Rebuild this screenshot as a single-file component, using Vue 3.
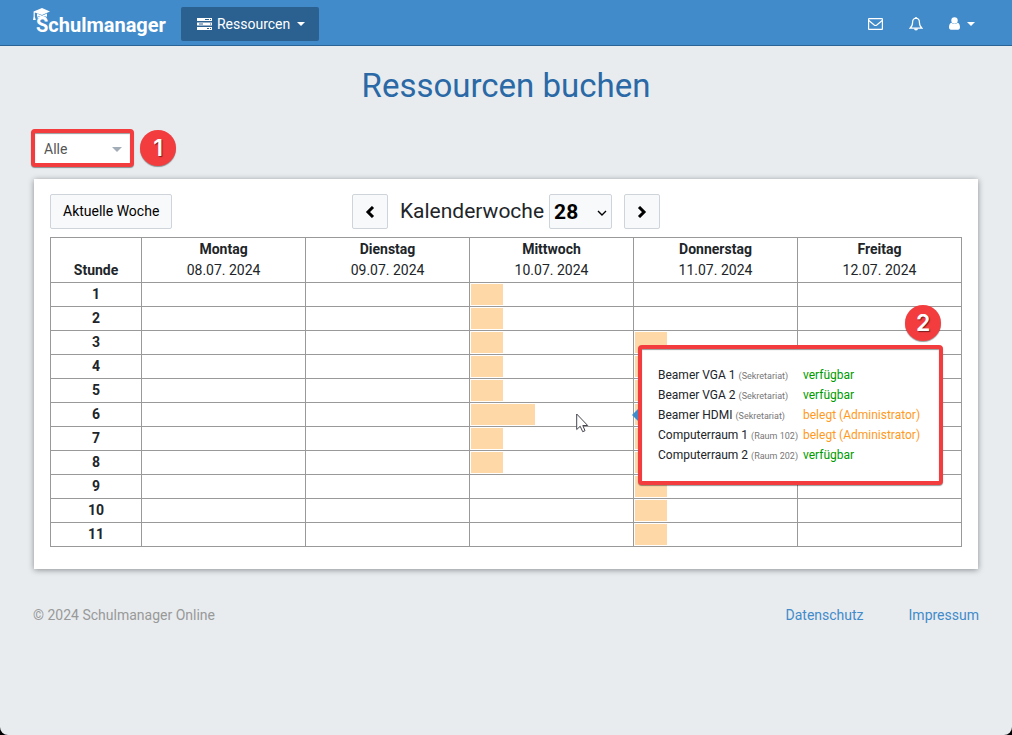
<script setup>
import { ref } from 'vue'

const filter = ref('Alle')
const week = ref('28')

const days = [
  { name: 'Montag', date: '08.07. 2024' },
  { name: 'Dienstag', date: '09.07. 2024' },
  { name: 'Mittwoch', date: '10.07. 2024' },
  { name: 'Donnerstag', date: '11.07. 2024' },
  { name: 'Freitag', date: '12.07. 2024' },
]

const hours = [1, 2, 3, 4, 5, 6, 7, 8, 9, 10, 11]

// Number of booked resources per weekday and lesson
const bookings = {
  Mittwoch: { 1: 1, 2: 1, 3: 1, 4: 1, 5: 1, 6: 2, 7: 1, 8: 1 },
  Donnerstag: { 3: 1, 4: 1, 5: 1, 6: 1, 7: 1, 8: 1, 9: 1, 10: 1, 11: 1 },
}

const booked = (day, hour) => bookings[day.name]?.[hour] ?? 0

const resources = [
  { name: 'Beamer VGA 1', room: 'Sekretariat' },
  { name: 'Beamer VGA 2', room: 'Sekretariat' },
  { name: 'Beamer HDMI', room: 'Sekretariat', by: 'Administrator' },
  { name: 'Computerraum 1', room: 'Raum 102', by: 'Administrator' },
  { name: 'Computerraum 2', room: 'Raum 202' },
]
</script>

<template>
  <div class="page">
    <header class="topbar">
      <a href="#" class="brand">
        <svg class="cap" width="18" height="15" viewBox="0 0 18 15" aria-hidden="true">
          <path d="M9 0 17 3.600 9 7 1.800 4.500 1.800 8.500 2.800 12 0 12 .6 8.500 .6 3.500Z" fill="#fff" />
          <path d="M4 5.500 9 7.800 14 5.500V8.800L11.500 8.200 9 9.500 6.500 8.200 4 8.800Z" fill="#fff" />
          <path d="M4.500 10 7.500 9 9 10.500 11 9 13.500 10.500" fill="none" stroke="#fff" stroke-width="1.300" />
        </svg>
        Schulmanager
      </a>
      <button type="button" class="module">
        <svg width="15" height="12" viewBox="0 0 15 12" aria-hidden="true">
          <path fill="#fff" d="M0 0H15V3H0ZM0 4.500H15V7.500H0ZM0 9H15V12H0Z" />
          <path stroke="#2a6191" d="M8 1.500H12M2 6H6M10 10.500H12" />
          <path stroke="#2a6191" d="M13 1.500H14M13 6H14M13 10.500H14" />
        </svg>
        Ressourcen
        <span class="caret"></span>
      </button>
      <nav class="tools">
        <button type="button" aria-label="Nachrichten">
          <svg width="15" height="12" viewBox="0 0 15 12" fill="none" stroke="#fff" stroke-width="1.200">
            <rect x=".6" y=".6" width="13.800" height="10.800" rx=".5" />
            <path d="M.8 2.500 6.200 7Q7.500 8 8.800 7L14.200 2.500" />
          </svg>
        </button>
        <button type="button" aria-label="Benachrichtigungen">
          <svg width="14" height="14" viewBox="0 0 14 14">
            <path d="M7 1.200C4.500 1.500 3.600 3.200 3.600 5.200 3.600 8.500 2.500 10 1 11.200H13C11.500 10 10.400 8.500 10.400 5.200 10.400 3.200 9.500 1.500 7 1.200Z" fill="none" stroke="#fff" stroke-width="1.200" />
            <path d="M6.300 0H7.700V1.500H6.300ZM5 11.500H9A2 2 0 0 1 5 11.500Z" fill="#fff" />
          </svg>
        </button>
        <button type="button" aria-label="Benutzer" class="user">
          <svg width="11" height="13" viewBox="0 0 11 13" fill="#fff">
            <circle cx="5.500" cy="3.500" r="3.200" />
            <path d="M2.500 5.800C.8 6.200 0 8 0 10.300 0 12 .8 12.700 2 12.700H9C10.200 12.700 11 12 11 10.300 11 8 10.200 6.200 8.500 5.800 7.200 7.500 3.800 7.500 2.500 5.800Z" />
          </svg>
          <span class="caret"></span>
        </button>
      </nav>
    </header>

    <main class="content">
      <h1>Ressourcen buchen</h1>

      <div class="filter-row">
        <div class="filter marked">
          <select v-model="filter" aria-label="Ressource">
            <option>Alle</option>
          </select>
          <span class="caret"></span>
        </div>
        <span class="marker">1</span>
      </div>

      <section class="card">
        <div class="toolbar">
          <button type="button" class="btn today">Aktuelle Woche</button>
          <div class="week">
            <button type="button" class="btn step" aria-label="Vorherige Woche">
              <svg width="10" height="12" viewBox="0 0 10 12"><path d="M8 1 3 6 8 11" fill="none" stroke="#000" stroke-width="3" /></svg>
            </button>
            <div class="week-pick">
              <label for="week">Kalenderwoche</label>
              <div class="week-select">
                <select id="week" v-model="week" class="btn">
                  <option>28</option>
                </select>
                <svg width="10" height="6" viewBox="0 0 10 6"><path d="M1 1 5 5 9 1" fill="none" stroke="#000" stroke-width="1.400" /></svg>
              </div>
            </div>
            <button type="button" class="btn step" aria-label="Nächste Woche">
              <svg width="10" height="12" viewBox="0 0 10 12"><path d="M2 1 7 6 2 11" fill="none" stroke="#000" stroke-width="3" /></svg>
            </button>
          </div>
        </div>

        <table class="plan">
          <thead>
            <tr>
              <th scope="col" class="hour">Stunde</th>
              <th v-for="day in days" :key="day.name" scope="col">
                {{ day.name }}<span class="date">{{ day.date }}</span>
              </th>
            </tr>
          </thead>
          <tbody>
            <tr v-for="hour in hours" :key="hour">
              <th scope="row">{{ hour }}</th>
              <td v-for="day in days" :key="day.name">
                <div class="slot">
                  <div class="bar" :style="{ width: booked(day, hour) * 20 + '%' }"></div>
                  <svg v-if="hour === 6 && day.name === 'Mittwoch'" class="pointer" width="13" height="20" viewBox="0 0 13 20" aria-hidden="true">
                    <path d="M.7 1V16.500L4.200 13.300 6.700 18.700 9 17.700 6.800 12.500H11.700Z" fill="#fff" stroke="#45454f" />
                  </svg>
                  <div v-if="hour === 6 && day.name === 'Donnerstag'" class="popover marked">
                    <span class="marker">2</span>
                    <table class="status">
                      <tbody>
                        <tr v-for="r in resources" :key="r.name">
                          <td>{{ r.name }} <small>({{ r.room }})</small></td>
                          <td :class="r.by ? 'taken' : 'free'">{{ r.by ? `belegt (${r.by})` : 'verfügbar' }}</td>
                        </tr>
                      </tbody>
                    </table>
                  </div>
                </div>
              </td>
            </tr>
          </tbody>
        </table>
      </section>

      <footer>
        <span>© 2024 Schulmanager Online</span>
        <nav>
          <a href="#">Datenschutz</a>
          <a href="#">Impressum</a>
        </nav>
      </footer>
    </main>
  </div>
</template>

<style>
html,
body {
  margin: 0;
  background: #000;
}
</style>

<style scoped>
* {
  box-sizing: border-box;
}
.page {
  min-height: 100vh;
  background: #e8ecef;
  border-radius: 0 0 8px 8px;
  color: #212529;
  font: 14px/21px Roboto, "Liberation Sans", sans-serif;
}
button,
select {
  font: inherit;
  color: inherit;
  margin: 0;
}
svg {
  display: block;
  flex: none;
}
a {
  color: #428bca;
  text-decoration: none;
}
.caret {
  border: 4px solid transparent;
  border-top-color: currentColor;
  border-bottom: 0;
}
.topbar {
  display: flex;
  align-items: center;
  height: 46px;
  padding: 2px 33px 0;
  background: #428bca;
  border-bottom: 1px solid #2a6496;
  color: #fff;
}
.brand {
  position: relative;
  padding: 4px 0 0 3px;
  margin-right: 15px;
  color: #fff;
  font-size: 20px;
  font-weight: 700;
}
.cap {
  position: absolute;
  left: 0;
  top: -3px;
}
.module {
  display: flex;
  align-items: center;
  gap: 5px;
  height: 34px;
  padding: 1px 14px 0 16px;
  border: 0;
  border-radius: 2px;
  background: #2a6191;
}
.module .caret {
  margin-left: 2px;
}
.tools {
  display: flex;
  align-items: center;
  gap: 26px;
  margin-left: auto;
}
.tools button {
  display: flex;
  align-items: center;
  gap: 7px;
  padding: 0;
  border: 0;
  background: none;
}
.tools .user {
  margin-right: 4px;
}
.content {
  padding: 18px 34px 0;
}
h1 {
  margin: 0;
  color: #2a69a6;
  font-size: 33px;
  font-weight: 400;
  line-height: 44px;
  text-align: center;
}
.filter-row {
  display: flex;
  align-items: center;
  gap: 6px;
  margin: 21px -3px 12px;
}
.marked {
  border: 4px solid #f33c3e;
  border-radius: 4px;
  background: #fff;
  box-shadow: 0 1px 1px rgba(0, 0, 0, 0.4), inset 0 1px 1px rgba(0, 0, 0, 0.4);
}
.filter {
  position: relative;
  width: 103px;
  height: 38px;
  color: #555;
}
.filter select {
  appearance: none;
  display: block;
  width: 100%;
  height: 100%;
  padding: 2px 9px 0;
  border: 0;
  background: transparent;
}
.filter .caret {
  position: absolute;
  right: 8px;
  top: 14px;
  border-width: 5px 5px 0;
  color: #a3adb8;
}
.marker {
  display: flex;
  align-items: center;
  justify-content: center;
  width: 36px;
  height: 36px;
  border-radius: 50%;
  background: #f33c3e;
  box-shadow: 0 1px 1px rgba(0, 0, 0, 0.4);
  color: #fff;
  font: 600 23px/36px Inter, "Open Sans", sans-serif;
  text-shadow: 1px 1px 1px rgba(0, 0, 0, 0.5);
}
.card {
  padding: 15px 16px 22px;
  background: #fff;
  box-shadow: 0 1px 6px rgba(0, 0, 0, 0.4);
}
.toolbar {
  display: grid;
  grid-template-columns: 1fr auto 1fr;
  align-items: center;
  margin-bottom: 8px;
}
.btn {
  height: 35px;
  border: 1px solid #ced4da;
  border-radius: 2px;
  background: #f8f9fb;
  color: #000;
}
.today {
  justify-self: start;
  padding: 0 12px;
}
.week,
.week-pick {
  display: flex;
  align-items: center;
}
.week {
  gap: 12px;
}
.week-pick {
  gap: 5px;
  font-size: 21px;
}
.step {
  display: flex;
  align-items: center;
  justify-content: center;
  width: 36px;
  padding: 0;
}
.week-select {
  position: relative;
}
.week-select select {
  appearance: none;
  display: block;
  width: 63px;
  padding: 2px 4px 0;
  font-weight: 700;
}
.week-select svg {
  position: absolute;
  right: 5px;
  top: 16px;
}
.plan {
  width: 100%;
  table-layout: fixed;
  border-collapse: collapse;
}
.plan > * > tr > * {
  height: 24px;
  padding: 0;
  border: 1px solid #999;
}
.plan > thead > tr > th {
  height: 45px;
  padding: 1px 0;
  vertical-align: bottom;
  text-align: center;
}
.plan > thead > tr > .hour {
  width: 10%;
}
.date {
  display: block;
  font-weight: 400;
}
.slot {
  position: relative;
  height: 23px;
  padding: 1px;
}
.bar {
  height: 21px;
  background: #ffd8a8;
}
.pointer {
  position: absolute;
  left: 65%;
  top: 10px;
}
.popover {
  position: absolute;
  z-index: 1;
  left: 4px;
  top: 50%;
  transform: translateY(-50%);
  padding: 16px 19px 16px 14px;
}
.popover::before {
  content: "";
  position: absolute;
  right: 100%;
  top: 50%;
  margin: -6px 4px 0 0;
  border: 6px solid transparent;
  border-left: 0;
  border-right-color: #428bca;
}
.popover .marker {
  position: absolute;
  right: -2px;
  top: -44px;
}
.status {
  border-spacing: 0;
  font-size: 12px;
  line-height: 20px;
  white-space: nowrap;
}
.status td {
  padding: 0 5px 0 2px;
}
.status td + td {
  padding: 0;
}
.status small {
  color: #777;
  font-size: 9px;
  line-height: 1;
}
.free {
  color: #009a00;
}
.taken {
  color: #ff9a1e;
}
footer {
  display: flex;
  justify-content: space-between;
  margin: 36px -1px 0;
  color: #999;
}
footer nav {
  display: flex;
  gap: 45px;
}
</style>
